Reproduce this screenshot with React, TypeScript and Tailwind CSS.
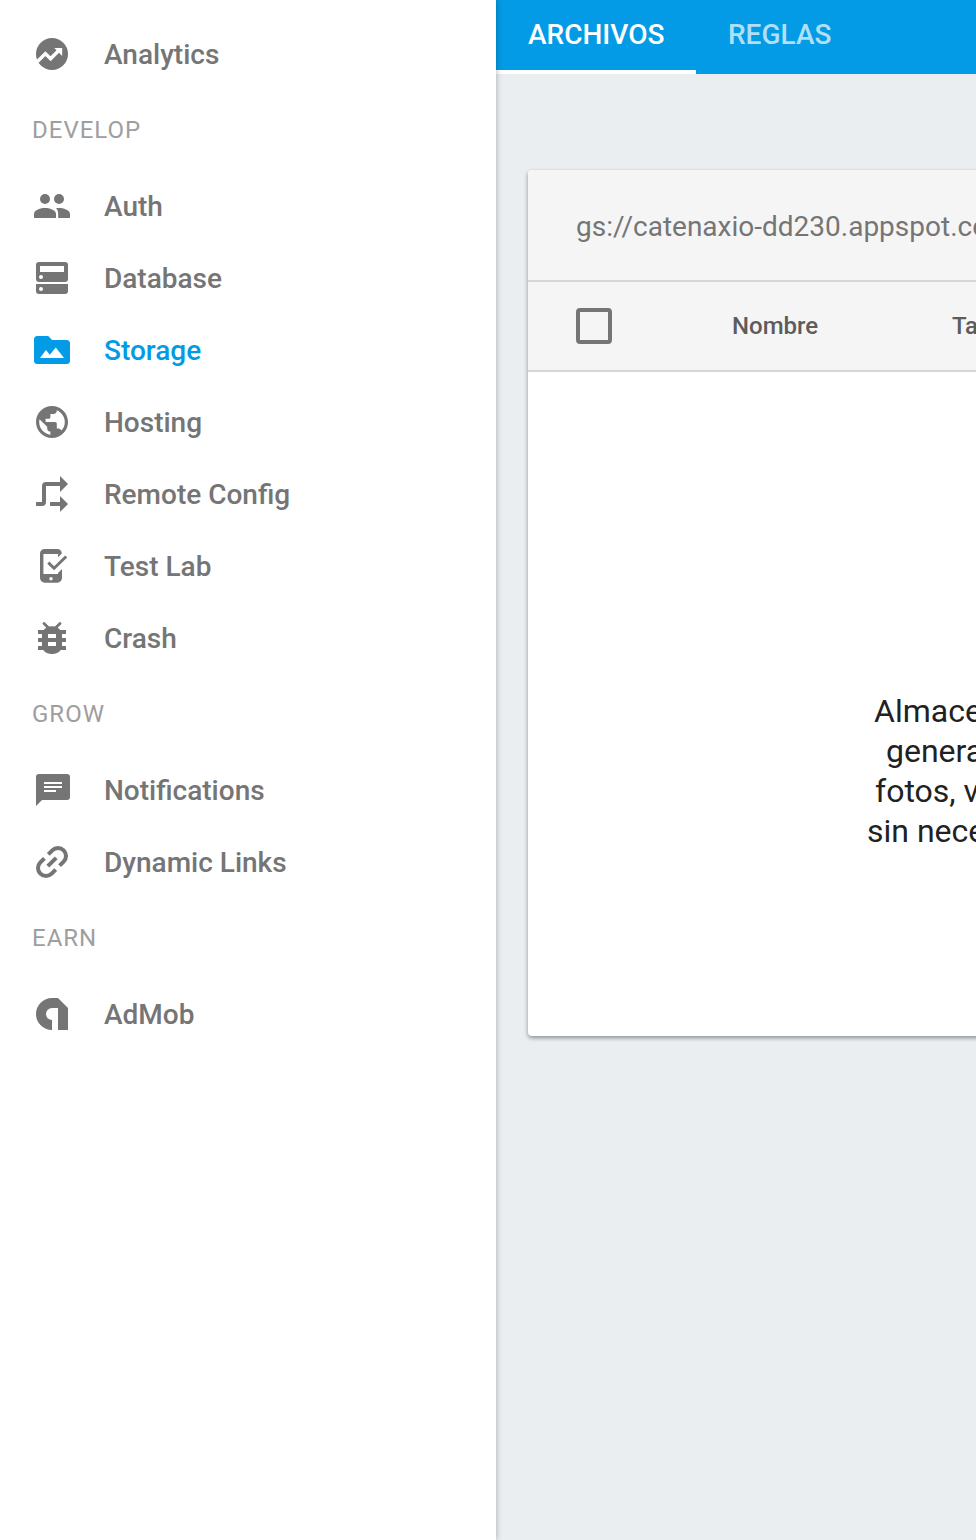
import type { ReactNode } from "react";

type Item = { label: string; icon: ReactNode; active?: boolean };
type Group = { title?: string; items: Item[] };

const groups: Group[] = [
  {
    items: [
      {
        label: "Analytics",
        icon: (
          <>
            <circle cx="18" cy="18" r="16" />
            <path d="M3.500 25.500 11.400 17.600 16.600 22.800 25 14.200" fill="none" stroke="#fff" strokeWidth="3.500" />
            <path d="M20.300 12H28.200v7.900z" fill="#fff" />
          </>
        ),
      },
    ],
  },
  {
    title: "DEVELOP",
    items: [
      {
        label: "Auth",
        icon: (
          <>
            <circle cx="11" cy="11" r="5" />
            <circle cx="25" cy="11" r="5" />
            <path d="M11 20C7 20 0 21.800 0 26v4h22v-4c0-4.200-7-6-11-6z" />
            <path d="M25 20c-1 0-2 .1-3 .2 1.600 1.500 2.200 3.500 2.200 5.800v4H36v-4c0-4.200-7-6-11-6z" />
          </>
        ),
      },
      {
        label: "Database",
        icon: (
          <path
            fillRule="evenodd"
            d="M5 2h26a3 3 0 0 1 3 3v14a3 3 0 0 1-3 3H5a3 3 0 0 1-3-3V5a3 3 0 0 1 3-3zM6 6v6h24V6zM7 15a2 2 0 1 0 0 4 2 2 0 0 0 0-4zM2 24h32v7a3 3 0 0 1-3 3H5a3 3 0 0 1-3-3zM7 27a2 2 0 1 0 0 4 2 2 0 0 0 0-4z"
          />
        ),
      },
      {
        label: "Storage",
        active: true,
        icon: (
          <path
            fillRule="evenodd"
            d="M3.500 4H13.500a2 2 0 0 1 1.400.6L18 8h14.500A3.500 3.500 0 0 1 36 11.500v17a3.500 3.500 0 0 1-3.500 3.500h-29A3.500 3.500 0 0 1 0 28.500v-21A3.500 3.500 0 0 1 3.500 4zM6 26h24l-8.200-10.400-6 7.200L12 18z"
          />
        ),
      },
      {
        label: "Hosting",
        icon: (
          <path
            transform="translate(-1.2 -1.2) scale(1.6)"
            d="M12 2C6.480 2 2 6.480 2 12s4.480 10 10 10 10-4.480 10-10S17.520 2 12 2zm-1 17.930c-3.950-.49-7-3.850-7-7.930 0-.62.08-1.210.21-1.790L9 15v1c0 1.100.9 2 2 2v1.930zm6.900-2.540c-.26-.81-1-1.390-1.900-1.390h-1v-3c0-.55-.45-1-1-1H8v-2h2c.55 0 1-.45 1-1V7h2c1.100 0 2-.9 2-2v-.41c2.930 1.190 5 4.060 5 7.410 0 2.080-.8 3.970-2.100 5.390z"
          />
        ),
      },
      {
        label: "Remote Config",
        icon: (
          <>
            <path d="M2 28h6a2 2 0 0 0 2-2V10a2 2 0 0 1 2-2h15M16 28h11" fill="none" stroke="currentColor" strokeWidth="4" />
            <path d="M26 0l8 8-8 8zM26 20l8 8-8 8z" />
          </>
        ),
      },
      {
        label: "Test Lab",
        icon: (
          <>
            <path
              fillRule="evenodd"
              d="M10.500 1h12.800a4.500 4.500 0 0 1 4.500 4.500L24 9.200V6H9.400v20H24v-1l4-4v9a4.700 4.700 0 0 1-4.700 4.700H10.700A4.700 4.700 0 0 1 6 30V5.500A4.500 4.500 0 0 1 10.500 1zM17 29a1.700 1.700 0 1 0 0 3.400 1.700 1.700 0 0 0 0-3.400z"
            />
            <path d="M14.300 14.600l5.800 5.600L32.200 8.500" fill="none" stroke="currentColor" strokeWidth="2.900" />
          </>
        ),
      },
      {
        label: "Crash",
        icon: (
          <>
            <path d="M10 3.500l4.500 4.500M26 3.500l-4.500 4.500" stroke="currentColor" strokeWidth="2.800" strokeLinecap="round" />
            <path
              fillRule="evenodd"
              d="M4 10h5.700C11.400 7.600 14.500 6.200 18 6.200s6.600 1.400 8.300 3.800H32v4h-4v4h4v4h-4v4h4v4h-5.300c-1.700 2.500-5 4-8.700 4s-7-1.500-8.700-4H4v-4h4v-4H4v-4h4v-4H4zM14 14v4h8v-4zM14 22v4h8v-4z"
            />
          </>
        ),
      },
    ],
  },
  {
    title: "GROW",
    items: [
      {
        label: "Notifications",
        icon: (
          <path
            fillRule="evenodd"
            d="M5 2h28a3 3 0 0 1 3 3v20a3 3 0 0 1-3 3H8l-6 6V5a3 3 0 0 1 3-3zM10 10v2h18v-2zM10 14v2h18v-2zM10 18v2h12v-2z"
          />
        ),
      },
      {
        label: "Dynamic Links",
        icon: (
          <path
            d="M14.300 10.400L18.340 6.340A8 8 0 0 1 29.660 17.660L25.600 21.700M21.700 25.600L17.660 29.660A8 8 0 0 1 6.340 18.340L10.400 14.300M13.800 22.200L22.200 13.800"
            fill="none"
            stroke="currentColor"
            strokeWidth="4"
          />
        ),
      },
    ],
  },
  {
    title: "EARN",
    items: [
      {
        label: "AdMob",
        icon: <path d="M18 2h6l10 10v22H24V12h-6a6 6 0 0 0 0 12v10a16 16 0 0 1 0-32z" />,
      },
    ],
  },
];

function NavRow({ label, icon, active }: Item) {
  return (
    <a className={`flex h-[72px] items-center gap-[34px] pl-[34px] ${active ? "text-[#039be5]" : "text-[#757575]"}`}>
      <svg className="size-9 shrink-0" viewBox="0 0 36 36" fill="currentColor" aria-hidden="true">
        {icon}
      </svg>
      <span className="pt-0.5 text-[28px] leading-9 font-medium whitespace-nowrap">{label}</span>
    </a>
  );
}

function Sidebar() {
  return (
    <nav className="z-10 w-[496px] shrink-0 bg-white pt-[18px] shadow-[0_0_6px_rgba(0,0,0,0.3)]">
      {groups.map((group) => (
        <section key={group.items[0].label}>
          {group.title && (
            <h2 className="flex h-20 items-center pl-8 text-2xl tracking-[1px] text-[#9e9e9e]">{group.title}</h2>
          )}
          {group.items.map((item) => (
            <NavRow key={item.label} {...item} />
          ))}
        </section>
      ))}
    </nav>
  );
}

export default function App() {
  return (
    <div className="flex h-[1540px] w-[976px] overflow-hidden bg-[#eaeef1] font-['Roboto',sans-serif]">
      <Sidebar />
      <main className="min-w-0 flex-1">
        <header className="flex h-[74px] bg-[#039be5] text-[28px] leading-[70px] font-medium text-white">
          <div className="w-[200px] border-b-4 border-white pl-8">ARCHIVOS</div>
          <div className="pl-8 text-white/70">REGLAS</div>
        </header>
        <section className="mt-24 -mr-8 ml-8 h-[866px] overflow-hidden rounded bg-white shadow-[0_2px_4px_rgba(0,0,0,0.4)]">
          <div className="flex h-28 items-center border-b-2 border-[#d6d6d6] bg-[#f5f5f5] pt-1 pl-12 text-[28px] whitespace-nowrap text-[#757575]">
            gs://catenaxio-dd230.appspot.co
          </div>
          <div className="flex h-[90px] items-center border-b-2 border-[#d6d6d6] bg-[#f5f5f5] pl-12 text-2xl font-medium text-[#5c5c5c]">
            <span className="size-9 shrink-0 rounded border-4 border-[#757575]" />
            <span className="ml-[120px] w-[220px] shrink-0">Nombre</span>
            <span>Ta</span>
          </div>
          <div className="pt-[319px] text-[32px] leading-10 whitespace-nowrap text-[#212121]">
            <p className="pl-[346px]">Almace</p>
            <p className="pl-[358px]">genera</p>
            <p className="pl-[347px]">fotos, v</p>
            <p className="pl-[339px]">sin nece</p>
          </div>
        </section>
      </main>
    </div>
  );
}
